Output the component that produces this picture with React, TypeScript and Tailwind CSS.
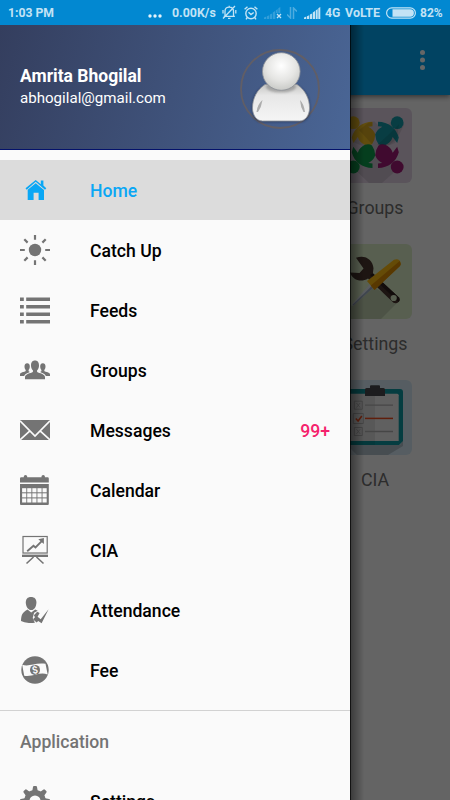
import type { ReactNode } from 'react';

interface MenuItem {
  label: string;
  icon: ReactNode;
  active?: boolean;
  badge?: string;
}

const HomeIcon = () => (
  <svg width="30" height="30" viewBox="0 0 30 30" fill="currentColor">
    <path d="M20.8 5.6h2.6v5l2.9 2.6-1.3 1.5-9.3-7.9-9 7.9-1.2-1.5L15.7 5l5.1 4.2z" />
    <path d="M15.7 8.2L24 15V25h-5.4v-7.3h-5V25H7.7V14.800z" />
  </svg>
);

const SunIcon = () => (
  <svg width="30" height="30" viewBox="0 0 30 30" fill="currentColor" stroke="currentColor" strokeWidth="2.2">
    <circle cx="15" cy="15" r="6.2" stroke="none" />
    <path d="M15 0v4.7M15 25.3V30M0 15h4.8M25.2 15H30M4.3 4.3l3.3 3.3M22.4 22.4l3.3 3.3M4.3 25.7l3.3-3.3M22.4 7.6l3.3-3.3" />
  </svg>
);

const ListIcon = () => (
  <svg width="30" height="30" viewBox="0 0 30 30" fill="currentColor">
    <path d="M0 2.5h3.8v3.6H0zM6.2 2.5H30v3.6H6.2zM0 10h3.8v3.6H0zM6.2 10H30v3.6H6.2zM0 17.5h3.8v3.6H0zM6.2 17.5H30v3.6H6.2zM0 25h3.8v3.6H0zM6.2 25H30v3.6H6.2z" />
  </svg>
);

const GroupIcon = () => (
  <svg width="30" height="30" viewBox="0 0 30 30" fill="currentColor">
    <path d="M15 5.6c3 0 4 2.2 4 4.9 0 2-.7 3.8-1.9 4.8v1.6c2.4 1.3 7.9 2 7.9 5v2.4H5v-2.4c0-3 5.5-3.7 7.9-5v-1.6C11.7 14.3 11 12.5 11 10.5c0-2.7 1-4.9 4-4.9z" />
    <path d="M7.2 8.2c2 0 2.6 1.5 2.6 3.4 0 1.5-.5 2.6-1.2 3.3v1.3l1.3.8c-2 .9-4.9 1.8-5.8 4H0v-1.6c0-2 4.2-2.2 5.7-3.3v-1.2c-.7-.7-1.2-1.8-1.2-3.3 0-1.9.7-3.4 2.7-3.4z" />
    <path d="M22.8 8.2c-2 0-2.6 1.5-2.6 3.4 0 1.5.5 2.6 1.2 3.3v1.3l-1.3.8c2 .9 4.900 1.800 5.800 4H30v-1.600c0-2-4.200-2.200-5.700-3.300v-1.200c.7-.7 1.200-1.800 1.200-3.300 0-1.900-.7-3.400-2.700-3.400z" />
  </svg>
);

const MailIcon = () => (
  <svg width="30" height="30" viewBox="0 0 30 30">
    <path d="M0 5h30v20H0z" fill="currentColor" />
    <path d="M0 5.8L15 21 30 5.8M0 24.8l10.2-9.2M30 24.8l-10.2-9.2" fill="none" stroke="#fafafa" strokeWidth="1.7" />
  </svg>
);

const CalendarIcon = () => (
  <svg width="30" height="30" viewBox="0 0 30 30">
    <path d="M0 3.5q0-1.3 1.2-1.3h2.6V1.500q0-1.500 1.700-1.500t1.700 1.500v.7h14.300v-.7q0-1.500 1.700-1.500t1.700 1.500v.7h2.700q1.200 0 1.200 1.300v4H0zM0 9h28.800v20q0 1-1 1H1q-1 0-1-1z" fill="currentColor" />
    {[13.2, 18.3, 23.4].map((y) =>
      [2.1, 7.2, 12.3, 17.4, 22.5].map((x) => (
        <rect key={`${x}-${y}`} x={x} y={y} width="4.2" height="4.1" fill="#fafafa" />
      ))
    )}
  </svg>
);

const BoardIcon = () => (
  <svg width="30" height="30" viewBox="0 0 30 30" fill="none" stroke="currentColor">
    <rect x="3" y="1.5" width="24.2" height="16.5" strokeWidth="1.2" />
    <path d="M2 21h26" strokeWidth="2" />
    <path d="M2 19.3h26" strokeWidth=".5" />
    <path d="M13.5 22l-7 6.5M16.5 22l7 6.5" strokeWidth="1.6" />
    <path d="M7.2 16.3l6.3-5.6 2 1.7 7-7" strokeWidth="1.9" />
    <path d="M18.3 4.2l5.6-1.2v6z" fill="currentColor" stroke="none" />
  </svg>
);

const AttendanceIcon = () => (
  <svg width="30" height="30" viewBox="0 0 30 30" fill="currentColor">
    <path d="M11 2c3.6 0 5.4 2.2 5.4 5.5 0 3.1-1.5 7.6-5.2 7.6S5.8 10.6 5.8 7.5C5.8 4.2 7.5 2 11 2z" />
    <path d="M7.500 14.500l3.700 3 4-3 2.500 1.300-3.600 2-1.400 5.200 2.200 4.700q-3 .3-6 .2-5 0-7.900-1.800c.2-4.800.6-8.600 6.500-11.600z" />
    <path d="M13.900 20.300l3.300-3.500 2.400 1.200-2 3.800 3.100 2.400 7.900-10-7 14-3.400-2.300-1.600 1.700-3.600-3.300 2-2z" />
  </svg>
);

const FeeIcon = () => (
  <svg width="30" height="30" viewBox="0 0 30 30">
    <circle cx="15" cy="15" r="13.7" fill="currentColor" />
    <path d="M2.2 9.7c7 2.5 12.5-2.3 23.3-.9l2.2 10.7c-8-3.2-13.7 2.5-23.5 1.2z" fill="#fafafa" />
    <circle cx="15" cy="14.9" r="5" fill="currentColor" />
    <text x="15" y="18.4" textAnchor="middle" transform="rotate(-14 15 15)" className="font-[Roboto] text-[10px] font-bold" fill="#fafafa">$</text>
  </svg>
);

const GearIcon = () => (
  <svg width="30" height="30" viewBox="0 0 30 30">
    <g fill="currentColor">
      {[0, 45, 90, 135, 180, 225, 270, 315].map((a) => (
        <path key={a} d="M12.1 6L13 .9Q13.1 0 14 0h2q.9 0 1 .9L17.9 6z" transform={`rotate(${a} 15 15)`} />
      ))}
      <circle cx="15" cy="15" r="11" />
    </g>
    <circle cx="15" cy="15" r="5.5" fill="#fafafa" />
  </svg>
);

const menu: MenuItem[] = [
  { label: 'Home', icon: <HomeIcon />, active: true },
  { label: 'Catch Up', icon: <SunIcon /> },
  { label: 'Feeds', icon: <ListIcon /> },
  { label: 'Groups', icon: <GroupIcon /> },
  { label: 'Messages', icon: <MailIcon />, badge: '99+' },
  { label: 'Calendar', icon: <CalendarIcon /> },
  { label: 'CIA', icon: <BoardIcon /> },
  { label: 'Attendance', icon: <AttendanceIcon /> },
  { label: 'Fee', icon: <FeeIcon /> },
];

const MenuRow = ({ label, icon, active, badge }: MenuItem) => (
  <div className={`flex h-[60px] shrink-0 items-center px-5 ${active ? 'bg-[#dcdcdc] text-[#0aa7f5]' : 'text-[#747474]'}`}>
    {icon}
    <span className={`ml-10 flex-1 pt-[2px] text-[17.6px] leading-6 font-medium ${active ? 'text-[#0aa7f5]' : 'text-black'}`}>{label}</span>
    {badge && <span className="pt-[2px] text-[17.6px] leading-6 font-medium text-[#f5226c]">{badge}</span>}
  </div>
);

const SignalBars = () => (
  <svg width="17" height="12" viewBox="0 0 17 12" fill="currentColor">
    <path d="M0 10.5L2.3 9.5V12H0zM3 9.2l2.2-1V12H3zM5.9 7.6l2.2-1.1V12H5.9zM8.8 5.6L11 4.1V12H8.8zM11.7 3.5l2-1.5v10h-2zM14.3 1.3L16.3 0v12h-2z" />
  </svg>
);

const StatusBar = () => (
  <div className="z-20 flex h-[25px] shrink-0 items-center bg-[#0288d1] pl-2 text-[12.2px] leading-[25px] font-bold text-[#c3e3f5]">
    <span className="w-[140px] pt-px">1:03 PM</span>
    <svg width="14" height="14" viewBox="0 0 14 14" fill="#e4f3fb">
      <circle cx="2" cy="10" r="1.7" />
      <circle cx="7" cy="10" r="1.7" />
      <circle cx="12" cy="10" r="1.7" />
    </svg>
    <span className="ml-[10px] w-[50px] text-[12.4px]">0.00K/s</span>
    {/* muted bell */}
    <svg className="shrink-0" width="15" height="15" viewBox="0 0 15 15" fill="none" stroke="currentColor" strokeWidth="1.3">
      <path d="M3 11V6.2q0-4 4.2-4 4.3 0 4.3 4V11M1.7 11.3h11.2M6 13.3h2.5M7.2.7v1.5M1 13.5L13 1M1 5v3.500M13.800 5v3.500" />
    </svg>
    <svg className="ml-[7px] shrink-0" width="14" height="14" viewBox="0 0 14 14" fill="none" stroke="currentColor" strokeWidth="1.4">
      <circle cx="7" cy="7.5" r="5.2" />
      <path d="M4.500 6.300L7 8.500l2.700-2M.6 3.300L3.500.8M13.400 3.300L10.500.8M3.300 11.500L2 13.300M10.700 11.500L12 13.300" />
    </svg>
    <div className="relative ml-[6px] flex">
      <div className="opacity-25"><SignalBars /></div>
      <svg className="absolute -right-px bottom-0 bg-[#0288d1]" width="6" height="6" viewBox="0 0 6 6" stroke="currentColor" strokeWidth="1.3">
        <path d="M1 1l4 4M5 1L1 5" />
      </svg>
    </div>
    <svg className="ml-[6px] shrink-0 opacity-40" width="10" height="12" viewBox="0 0 10 12" fill="none" stroke="currentColor" strokeWidth="1.5">
      <path d="M3.500 0v11L0 7.500M6.500 12V1L10 4.500" />
    </svg>
    <div className="mr-1 ml-[7px] shrink-0"><SignalBars /></div>
    <span className="w-[20px] pt-px">4G</span>
    <span className="w-[41px] text-[12.5px]">VoLTE</span>
    <svg className="shrink-0" width="30" height="12" viewBox="0 0 30 12">
      <rect x=".6" y=".8" width="28.8" height="10.4" rx="5.2" fill="none" stroke="currentColor" strokeWidth="1.2" />
      <path d="M6.500 2.300h17.700a3.700 3.700 0 0 1 0 7.400H6.500z" fill="currentColor" />
    </svg>
    <span className="ml-[4px] pt-px text-[12px]">82%</span>
  </div>
);

const Avatar = () => (
  <svg width="80" height="80" viewBox="0 0 80 80" fill="none">
    <defs>
      <radialGradient id="head" cx=".5" cy=".35" r=".65">
        <stop offset="0" stopColor="#fff" />
        <stop offset=".6" stopColor="#e5e5e3" />
        <stop offset="1" stopColor="#c9cac7" />
      </radialGradient>
      <linearGradient id="torso" x1="0" y1="0" x2="0" y2="1">
        <stop offset="0" stopColor="#c6c6c4" />
        <stop offset=".3" stopColor="#e7e7e7" />
        <stop offset="1" stopColor="#f5f5f5" />
      </linearGradient>
      <filter id="soft" x="-20%" y="-20%" width="140%" height="140%">
        <feGaussianBlur stdDeviation="1.3" />
      </filter>
    </defs>
    <circle cx="40" cy="40" r="39" stroke="#615e66" strokeWidth="1.8" />
    <path d="M23 37.500C15 43 11.500 51 12 61c0 6 4 12 10 12h38c6 0 10-6 10-12 .5-10-3-18-11-23.500z" fill="#1d2a4c" opacity=".6" filter="url(#soft)" />
    <path d="M25 35.500C16.500 41 12.500 50 12.500 59c0 7 4 13 10 13h37c6 0 10-6 10-13 0-9-4-18-12.500-23.500z" fill="url(#torso)" stroke="#8e9298" strokeWidth=".8" />
    <path d="M16.500 63q1-8 6-12-1 7-4.500 12zM65 63q-1-8-5-12 .5 7 3.500 12z" fill="#8a8a8a" opacity=".65" />
    <ellipse cx="41" cy="38" rx="15" ry="5.5" fill="#777" opacity=".5" filter="url(#soft)" />
    <circle cx="41.3" cy="22.5" r="18.8" fill="url(#head)" stroke="#8e9298" strokeWidth=".8" />
  </svg>
);

const PersonShape = () => (
  <>
    <circle cx="16.3" cy="14.7" r="6.4" />
    <path d="M14.700 29.500C17.500 19.500 25 14 35.500 13.700v4.500l-4.200.5q5.200 2.600 7 7.800-.3 5.500-3.300 9.800-3 1.800-7 .6-5.500-2.400-7.200-7.900l-4.500 6z" />
  </>
);

const GroupsTile = () => (
  <svg width="75" height="75" viewBox="0 0 75 75">
    <rect width="75" height="75" rx="6" fill="#e1d2e3" />
    <path d="M16 34L37 13l8 8 16-12 6 8-9 18-20 8zM14 58l20-20 28 22-17 15H32z" fill="#b9adbd" opacity=".55" />
    <g fill="#f0bd22"><PersonShape /></g>
    <g fill="#159aa8" transform="translate(76.5 0) scale(-1 1)"><PersonShape /></g>
    <g fill="#0d9c4c" transform="translate(0 73.7) scale(1 -1)"><PersonShape /></g>
    <g fill="#a01b75" transform="translate(76.5 73.7) scale(-1 -1)"><PersonShape /></g>
    <path d="M31 15l4.500-1.300v4.500l-4.200.5q5.200 2.600 7 7.800-.3 5.500-3.300 9.800L22 22zM50 28l12-12-2 15-8 6H40z" fill="#000" opacity=".1" />
  </svg>
);

const SettingsTile = () => (
  <svg width="75" height="75" viewBox="0 0 75 75">
    <rect width="75" height="75" rx="6" fill="#dcedc8" />
    <path d="M14 62l20-20 28 15-18 18H14z" fill="#a5b496" opacity=".5" />
    {/* wrench */}
    <path d="M19 13.800c9-3.500 17 2 17.500 10.500l-.6 5L62 53.500q1.500 2.500-.5 4.500t-5 .8L31 34.500c-7 4.500-15.500 1.500-18-6l9.500.5 4-4.500z" fill="#49362f" />
    <path d="M36 29.400L62 53.500q1.500 2.500-.5 4.500L33 31z" fill="#2e201c" />
    <circle cx="56.7" cy="54" r="3.1" fill="#dcedc8" />
    {/* screwdriver */}
    <path d="M33.500 39.500l3.500 3.500-20.500 18.500-1.500.3.500-2z" fill="#dfe5ee" />
    <path d="M37 43L16.500 61.500l-1-.8L35.500 41.300z" fill="#9faec3" />
    <path d="M30 37l27-21.200q3.500-1.500 5.500.7t.5 5.500L37.500 46z" fill="#fdbc12" />
    <path d="M33.800 41.500L62.700 17q1.800 2.600.3 5L37.500 46z" fill="#dc8c04" />
  </svg>
);

const CiaTile = () => (
  <svg width="75" height="75" viewBox="0 0 75 75">
    <rect width="75" height="75" rx="6" fill="#d6e9f5" />
    <path d="M10 65h53l3-5v6l-15 9H20z" fill="#b1c0cb" />
    <path d="M6 9h57q3 0 3 3v49l-4 4H6z" fill="#0e98a2" />
    <path d="M10 13.700h50.200q1.500 0 1.500 1.500V61H10z" fill="#f0eff0" />
    <path d="M6 9h32v56H6z" fill="#000" opacity=".08" />
    <path d="M33 8V6.300q0-1 1-1h8q1 0 1 1V8h3.500q1.500 0 1.500 1.500V16H28V9.500Q28 8 29.500 8z" fill="#47484b" />
    <path d="M28 25.200h28M28 51.500h28" stroke="#b0b0b0" strokeWidth="1.3" />
    <path d="M28 38.400h28" stroke="#ee4b1c" strokeWidth="1.5" />
    <g fill="none" stroke="#aaa" strokeWidth=".9">
      <path d="M17.300 21.200h8v8h-8zM19.500 23l3.600 4.500M23.100 23l-3.600 4.500M17.300 47.500h8v8h-8zM19.500 49.300l3.600 4.500M23.100 49.300l-3.600 4.500" />
      <path d="M16.300 33.500h10v10h-10z" />
    </g>
    <path d="M18.800 38.500l2.300 2.500 3.700-5" fill="none" stroke="#ee4b1c" strokeWidth="1.5" />
  </svg>
);

const tiles = [
  { label: 'Groups', art: <GroupsTile /> },
  { label: 'Settings', art: <SettingsTile /> },
  { label: 'CIA', art: <CiaTile /> },
];

export default function App() {
  return (
    <div className="flex h-[800px] w-[450px] flex-col overflow-hidden bg-[#fafafa] font-[Roboto,sans-serif]">
      <StatusBar />

      <div className="relative flex min-h-0 flex-1 flex-col">
        {/* Home screen */}
        <div className="z-[1] flex h-[70px] shrink-0 items-center justify-end bg-[#03a9f4] pr-[25px] shadow-[0_2px_5px_rgba(0,0,0,0.45)]">
          <svg width="5" height="22" viewBox="0 0 5 22" fill="#fff">
            <circle cx="2.5" cy="3.5" r="2.5" />
            <circle cx="2.5" cy="11" r="2.5" />
            <circle cx="2.5" cy="18.5" r="2.5" />
          </svg>
        </div>
        <div className="ml-auto flex w-[150px] flex-col pt-[13px]">
          {tiles.map((tile) => (
            <div key={tile.label} className="flex h-[136px] flex-col items-center">
              <div className="-ml-px">{tile.art}</div>
              <span className="mt-[13px] text-[17.8px] leading-6 text-[#6f6f6f]">{tile.label}</span>
            </div>
          ))}
        </div>

        {/* Scrim */}
        <div className="absolute inset-0 z-[2] bg-black/60" />

        {/* Drawer */}
        <div className="absolute inset-y-0 left-0 z-[3] flex w-[350px] flex-col overflow-hidden bg-[#fafafa]">
          <div className="flex h-[125px] shrink-0 items-center justify-between border-b border-[#04126b] bg-linear-[105deg,#343e5e,#4a6696] pr-[30px] pl-5">
            <div className="pb-[3px] text-white">
              <div className="text-[17.5px] leading-6 font-bold">Amrita Bhogilal</div>
              <div className="text-[15.1px] leading-5">abhogilal@gmail.com</div>
            </div>
            <div className="pt-[4px]"><Avatar /></div>
          </div>
          <div className="flex shrink-0 flex-col py-[10px]">
            {menu.map((item) => (
              <MenuRow key={item.label} {...item} />
            ))}
          </div>
          <div className="flex h-[61px] shrink-0 items-center border-t border-[#d2d2d2] px-5 pt-[3px] text-[17.6px] font-medium text-[#737373]">
            Application
          </div>
          <MenuRow label="Settings" icon={<GearIcon />} />
        </div>
        <div className="absolute inset-y-0 left-[350px] z-[3] w-[14px] border-l border-black/80 bg-linear-to-r from-black/40 to-transparent" />
      </div>
    </div>
  );
}
